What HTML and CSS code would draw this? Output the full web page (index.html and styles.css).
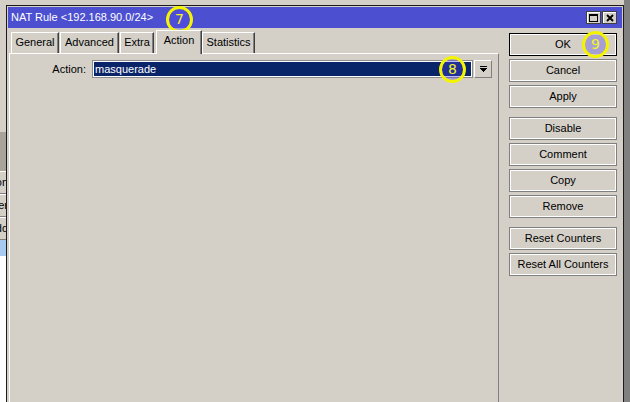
FILE: index.html
```html
<!DOCTYPE html>
<html>
<head>
<meta charset="utf-8">
<link rel="stylesheet" href="styles.css">
</head>
<body>
<div class="desktop">
  <div class="bgwin">
    <div class="bg-top"></div>
    <div class="bg-head"></div>
    <div class="bg-row"><span>Action</span></div>
    <div class="bg-row"><span>Filter</span></div>
    <div class="bg-row"><span>Add</span></div>
    <div class="bg-sel"></div>
    <div class="bg-list"></div>
  </div>
  <div class="edge-right"></div>

  <div class="window">
    <div class="titlebar">
      <span class="title">NAT Rule &lt;192.168.90.0/24&gt;</span>
      <div class="tb-btns">
        <div class="tb-btn">
          <svg width="9" height="8" viewBox="0 0 9 8" shape-rendering="crispEdges"><rect x="0" y="0" width="9" height="2" fill="#000"/><rect x="0.5" y="0.5" width="8" height="7" fill="none" stroke="#000" stroke-width="1"/></svg>
        </div>
        <div class="tb-btn">
          <svg width="8" height="8" viewBox="0 0 8 8"><path d="M1 1 L7 7 M7 1 L1 7" stroke="#000" stroke-width="1.9" fill="none"/></svg>
        </div>
      </div>
    </div>
    <div class="wbody">
      <div class="main">
        <div class="tabs">
          <div class="tab w-general">General</div>
          <div class="tab w-advanced">Advanced</div>
          <div class="tab w-extra">Extra</div>
          <div class="tab w-action active">Action</div>
          <div class="tab w-stats">Statistics</div>
        </div>
        <div class="panel">
          <div class="field-row">
            <div class="label">Action:</div>
            <div class="field">masquerade</div>
            <div class="drop">
              <svg width="7" height="6" viewBox="0 0 7 6" shape-rendering="crispEdges"><rect x="0" y="0" width="7" height="1" fill="#000"/><rect x="0" y="2" width="7" height="1" fill="#000"/><rect x="1" y="3" width="5" height="1" fill="#000"/><rect x="2" y="4" width="3" height="1" fill="#000"/><rect x="3" y="5" width="1" height="1" fill="#000"/></svg>
            </div>
          </div>
        </div>
      </div>
      <div class="buttons">
        <div class="btn default">OK</div>
        <div class="btn">Cancel</div>
        <div class="btn">Apply</div>
        <div class="btn sep">Disable</div>
        <div class="btn">Comment</div>
        <div class="btn">Copy</div>
        <div class="btn">Remove</div>
        <div class="btn sep">Reset Counters</div>
        <div class="btn">Reset All Counters</div>
      </div>
    </div>
  </div>

  <div class="mark m7">7</div>
  <div class="mark m8">8</div>
  <div class="mark m9">9</div>
</div>
</body>
</html>
```

FILE: styles.css
```css
html, body {
  margin: 0;
  padding: 0;
}
body {
  width: 630px;
  height: 402px;
  overflow: hidden;
  background: #d4d0c8;
  font-family: "Liberation Sans", Arial, sans-serif;
  font-size: 11px;
  color: #000;
}
.desktop {
  position: relative;
  width: 630px;
  height: 402px;
  overflow: hidden;
}

/* background window fragment on the left */
.bgwin {
  position: absolute;
  left: 0;
  top: 0;
  width: 6px;
  height: 402px;
  overflow: hidden;
  display: flex;
  flex-direction: column;
}
.bg-top { height: 132px; background: #d4d0c8; }
.bg-head { height: 39px; background: #a8a49c; }
.bg-row {
  height: 23px;
  box-sizing: border-box;
  border-top: 1px solid #fff;
  border-bottom: 1px solid #808080;
  line-height: 21px;
  white-space: nowrap;
  background: #d4d0c8;
}
.bg-row span {
  display: block;
  width: 60px;
  margin-left: -52px;
  text-align: right;
}
.bg-sel { height: 16px; background: #a6caf0; }
.bg-list { flex: 1; background: #fff; }

.edge-right {
  position: absolute;
  right: 0;
  top: 0;
  width: 6px;
  height: 402px;
  background: #808080;
}

/* main dialog window */
.window {
  position: absolute;
  left: 6px;
  top: 5px;
  width: 618px;
  height: 400px;
  box-sizing: border-box;
  border: 1px solid #1c1c1c;
  border-bottom: none;
  padding: 1px;
  background: #d4d0c8;
  display: flex;
  flex-direction: column;
}
.titlebar {
  height: 21px;
  flex: none;
  background: #4c50d0;
  color: #fff;
  display: flex;
  align-items: center;
  padding: 0 5px 0 3px;
}
.title {
  flex: 1;
  line-height: 21px;
  white-space: nowrap;
}
.tb-btns {
  display: flex;
  gap: 1px;
}
.tb-btn {
  width: 15px;
  height: 13px;
  box-sizing: border-box;
  background: #d4d0c8;
  border: 1px solid #404040;
  box-shadow: inset 1px 1px #fff;
  display: flex;
  align-items: center;
  justify-content: center;
}
.tb-btn svg { display: block; }

.wbody {
  flex: 1;
  display: flex;
  gap: 10px;
  padding: 2px 5px 0 1px;
}
.main {
  width: 490px;
  display: flex;
  flex-direction: column;
}
.tabs {
  height: 23px;
  display: flex;
  align-items: flex-end;
  padding-left: 2px;
}
.tab {
  height: 21px;
  box-sizing: border-box;
  border-top: 1px solid #fff;
  border-left: 1px solid #fff;
  border-right: 1px solid #404040;
  box-shadow: inset -1px 0 #808080;
  line-height: 19px;
  text-align: center;
  margin-right: 1px;
  white-space: nowrap;
}
.tab.active {
  height: 24px;
  margin-bottom: -1px;
  position: relative;
  z-index: 1;
  line-height: 18px;
  background: #d4d0c8;
}
.w-general { width: 48px; }
.w-advanced { width: 59px; }
.w-extra { width: 34px; margin-right: 2px; }
.w-action { width: 46px; margin-right: 0; }
.w-stats { width: 53px; }

.panel {
  flex: 1;
  border-top: 1px solid #fff;
  border-left: 1px solid #fff;
  border-right: 1px solid #808080;
  padding-top: 6px;
}
.field-row {
  display: flex;
  align-items: center;
  height: 18px;
}
.label {
  width: 76px;
  text-align: right;
  margin-right: 6px;
}
.field {
  width: 381px;
  height: 18px;
  box-sizing: border-box;
  border: 1px solid #8c8c8c;
  box-shadow: inset 0 0 0 1px #fff;
  background: #0a246a;
  color: #fff;
  padding-left: 2px;
  line-height: 16px;
}
.drop {
  width: 18px;
  height: 18px;
  margin-left: 1px;
  box-sizing: border-box;
  border: 1px solid;
  border-color: #fff #808080 #808080 #fff;
  display: flex;
  align-items: center;
  justify-content: center;
}
.drop svg { display: block; }

.buttons {
  width: 108px;
  display: flex;
  flex-direction: column;
  gap: 3px;
  padding-top: 3px;
}
.btn {
  height: 23px;
  box-sizing: border-box;
  border: 1px solid #808080;
  box-shadow: inset 0 0 0 1px #fff;
  text-align: center;
  line-height: 21px;
  white-space: nowrap;
}
.btn.default { border-color: #000; }
.btn.sep { margin-top: 6px; }

/* annotation markers */
.mark {
  position: absolute;
  width: 27px;
  height: 27px;
  box-sizing: border-box;
  border: 3px solid #f4f400;
  border-radius: 50%;
  background: rgba(80, 70, 240, 0.35);
  color: #f4f420;
  font-family: "DejaVu Sans", sans-serif;
  font-size: 14px;
  line-height: 21px;
  text-align: center;
}
.m7 { left: 166px; top: 6px; }
.m8 { left: 439px; top: 56px; }
.m9 { left: 582px; top: 31px; }
```
